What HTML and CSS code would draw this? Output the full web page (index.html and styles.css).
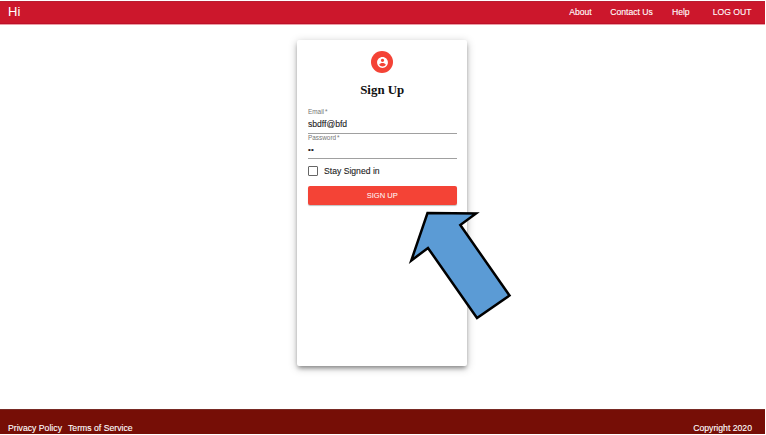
FILE: index.html
```html
<!DOCTYPE html>
<html lang="en">
<head>
<meta charset="utf-8">
<title>Sign Up</title>
<link rel="stylesheet" href="styles.css">
</head>
<body>
<div class="page">
  <header class="topbar">
    <span class="brand">Hi</span>
    <nav class="nav">
      <a class="about">About</a>
      <a class="contact">Contact Us</a>
      <a class="help">Help</a>
      <a class="logout">LOG OUT</a>
    </nav>
  </header>
  <main class="main">
    <form class="card">
      <div class="avatar">
        <svg viewBox="0 0 24 24" width="13" height="13"><path fill="#fff" d="M12 2C6.480 2 2 6.480 2 12s4.480 10 10 10 10-4.480 10-10S17.520 2 12 2zm0 3c1.660 0 3 1.340 3 3s-1.340 3-3 3-3-1.340-3-3 1.340-3 3-3zm0 14.200c-2.500 0-4.710-1.280-6-3.220.03-1.990 4-3.080 6-3.080 1.990 0 5.970 1.090 6 3.080-1.290 1.940-3.500 3.220-6 3.220z"/></svg>
      </div>
      <h1 class="title">Sign Up</h1>
      <div class="field">
        <span class="label">Email<i class="star">*</i></span>
        <span class="value">sbdff@bfd</span>
      </div>
      <div class="field">
        <span class="label">Password<i class="star">*</i></span>
        <span class="value dots">••</span>
      </div>
      <div class="stay"><span class="box"></span><span class="stay-text">Stay Signed in</span></div>
      <div class="button"><span class="button-text">SIGN UP</span></div>
    </form>
  </main>
  <footer class="footer">
    <div class="legal"><a class="privacy">Privacy Policy</a><a class="terms">Terms of Service</a></div>
    <span class="copyright">Copyright 2020</span>
  </footer>
  <svg class="arrow" viewBox="400 200 120 130" width="120" height="130">
    <path d="M427.500 213L476 213.500L460.300 225L509.500 295.500L477 318L428 248L411.300 260.500Z"/>
  </svg>
</div>
</body>
</html>
```
FILE: styles.css
```css
* { box-sizing: border-box; }

body {
  margin: 0;
  background: #fff;
  font-family: "Liberation Sans", Arial, sans-serif;
  overflow: hidden;
}

.page {
  position: relative;
  display: flex;
  flex-direction: column;
  width: 765px;
  height: 434px;
  padding-top: 1px;
}

.topbar {
  display: flex;
  justify-content: space-between;
  height: 23px;
  padding: 0 13.500px 0 8px;
  background: #cc172c;
  border-top: 1px solid #b91d31;
  border-bottom: 1px solid #bd1029;
  box-shadow: 0 1px 0 #eb9da5;
  color: #fff;
  line-height: 19px;
}

.brand { font-size: 13px; }

.nav {
  display: flex;
  font-size: 8.650px;
  line-height: 20px;
  -webkit-text-stroke: .1px;
}

.contact { margin-left: 18.500px; }
.help { margin-left: 19px; }
.logout { margin-left: 23px; }

.main {
  flex: 1;
  display: flex;
  padding: 16px 0 0 297px;
}

.card {
  display: flex;
  flex-direction: column;
  width: 170px;
  height: 326px;
  padding: 11px 10.500px 0 11px;
  border-radius: 2px;
  background: #fff;
  box-shadow: 0 3px 4px -1px rgba(0, 0, 0, .35), 0 2px 9px rgba(0, 0, 0, .25);
}

.avatar {
  display: flex;
  align-items: center;
  justify-content: center;
  align-self: center;
  width: 22px;
  height: 22px;
  border-radius: 50%;
  background: #f44336;
}

.title {
  margin: 9px 0 0;
  color: #111;
  font: bold 12.900px/17px "Liberation Serif", "Times New Roman", serif;
  text-align: center;
}

.field {
  display: flex;
  flex-direction: column;
  height: 25.500px;
  border-bottom: 1px solid #a0a0a0;
}

.title + .field { margin-top: 9px; }

.label {
  color: #757575;
  font-size: 6.400px;
  line-height: 8px;
}

.star {
  margin-left: 1px;
  font-style: normal;
}

.value {
  color: #222;
  font-size: 8.600px;
  line-height: 17px;
  -webkit-text-stroke: .1px;
}

.dots {
  font-size: 8px;
  letter-spacing: .3px;
  line-height: 16px;
}

.stay {
  display: flex;
  align-items: center;
  height: 24px;
}

.box {
  width: 10px;
  height: 10px;
  border: 1px solid #666;
  border-radius: 1px;
}

.stay-text {
  margin-left: 6px;
  color: #222;
  font-size: 8.650px;
  -webkit-text-stroke: .1px;
}

.button {
  height: 19px;
  margin-top: 3px;
  border-radius: 2px;
  background: #f44336;
  box-shadow: 0 1px 1px rgba(0, 0, 0, .25);
  color: #fff;
  font-size: 7.600px;
  line-height: 19px;
  text-align: center;
}

.footer {
  display: flex;
  justify-content: space-between;
  height: 25px;
  padding: 10px 13px 0 8px;
  border-top: 1px solid #782a24;
  background: #760e06;
  color: #fff;
  font-size: 8.680px;
  line-height: 16px;
  -webkit-text-stroke: .1px;
}

.terms { margin-left: 6px; }

.arrow {
  position: absolute;
  left: 400px;
  top: 200px;
  fill: #5b9bd5;
  stroke: #000;
  stroke-width: 2.500;
}
```
